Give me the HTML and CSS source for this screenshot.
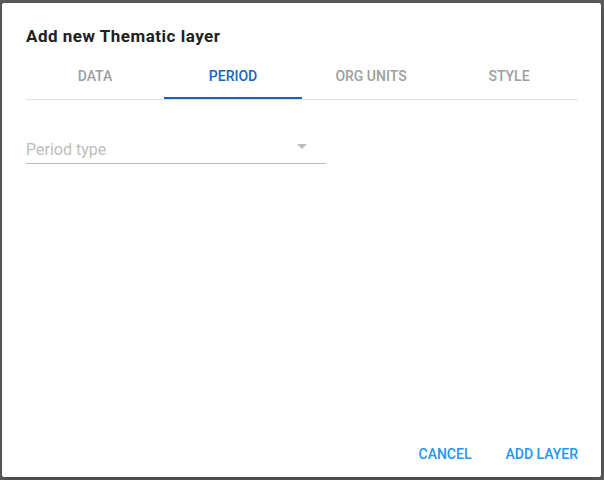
FILE: index.html
```html
<!DOCTYPE html>
<html>
<head>
<meta charset="utf-8">
<link rel="stylesheet" href="styles.css">
</head>
<body>
<div class="backdrop">
  <div class="dialog">
    <h2 class="title">Add new Thematic layer</h2>
    <div class="tabs">
      <div class="tab">DATA</div>
      <div class="tab active">PERIOD</div>
      <div class="tab">ORG UNITS</div>
      <div class="tab">STYLE</div>
    </div>
    <div class="content">
      <div class="select">
        <span class="placeholder">Period type</span>
        <svg class="arrow" width="10" height="5" viewBox="0 0 10 5"><path d="M0 0 L10 0 L5 5 Z" fill="#bdbdbd"/></svg>
      </div>
    </div>
    <div class="actions">
      <button class="btn">CANCEL</button>
      <button class="btn">ADD LAYER</button>
    </div>
  </div>
</div>
</body>
</html>
```
FILE: styles.css
```css
html, body {
  margin: 0;
  padding: 0;
  width: 604px;
  height: 480px;
  overflow: hidden;
  font-family: Roboto, "Liberation Sans", sans-serif;
}
.backdrop {
  width: 604px;
  height: 480px;
  background: #5c5e5f;
  padding: 3px 3px 3px 2px;
  box-sizing: border-box;
  display: flex;
}
.dialog {
  flex: 1;
  background: #fff;
  border-radius: 2px;
  display: flex;
  flex-direction: column;
  padding: 0 23px 0 24px;
  box-shadow: 0 2px 8px rgba(0,0,0,0.3);
}
.title {
  margin: 0;
  padding-top: 23px;
  font-size: 17px;
  font-weight: 700;
  line-height: 20px;
  color: #212121;
  letter-spacing: 0.5px;
}
.tabs {
  display: flex;
  margin-top: 11px;
  border-bottom: 1px solid #e0e0e0;
}
.tab {
  flex: 1;
  height: 42px;
  display: flex;
  align-items: center;
  justify-content: center;
  font-size: 14px;
  font-weight: 500;
  color: #9e9e9e;
  box-sizing: border-box;
  padding-bottom: 4px;
}
.tab.active {
  color: #1565c0;
  border-bottom: 2px solid #1565c0;
  margin-bottom: -1px;
  padding-bottom: 2px;
}
.content {
  flex: 1;
  padding-top: 39px;
}
.select {
  width: 300px;
  height: 25px;
  border-bottom: 1px solid #bdbdbd;
  position: relative;
  box-sizing: border-box;
}
.placeholder {
  font-size: 16px;
  color: #bdbdbd;
  line-height: 20px;
  display: block;
  padding-top: 1px;
}
.arrow {
  position: absolute;
  right: 19px;
  top: 5px;
}
.actions {
  display: flex;
  justify-content: flex-end;
  padding-bottom: 12px;
}
.btn {
  background: none;
  border: none;
  font-family: Roboto, "Liberation Sans", sans-serif;
  font-size: 14px;
  font-weight: 500;
  color: #2196f3;
  padding: 0;
  height: 22px;
  line-height: 22px;
}
.btn + .btn {
  margin-left: 34px;
}
```
